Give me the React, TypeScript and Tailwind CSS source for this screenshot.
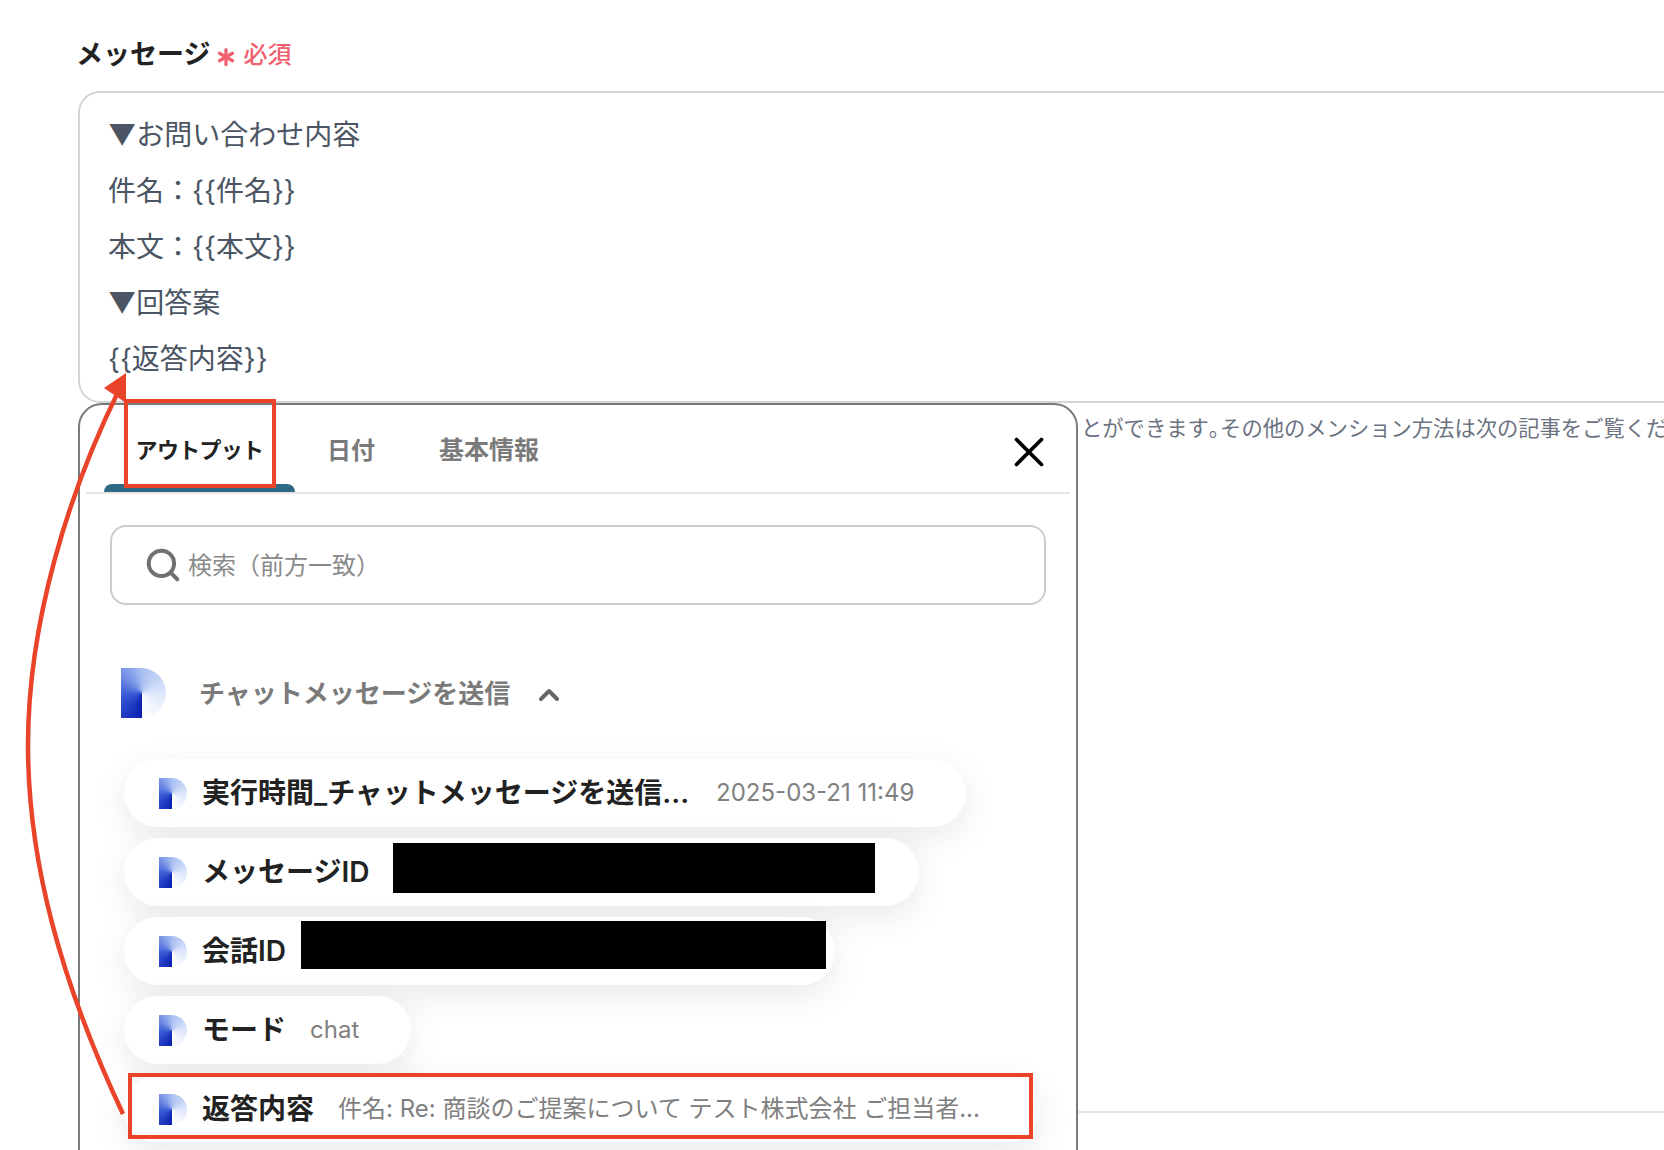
import { Asterisk, Search, X, ChevronUp } from "lucide-react";

interface Output {
  label: string;
  value?: string;
  width: string;
  redacted?: string;
  gap: string;
}

const outputs: Output[] = [
  { label: "実行時間_チャットメッセージを送信...", value: "2025-03-21 11:49", width: "w-[842px]", gap: "ml-[27px]" },
  { label: "メッセージID", width: "w-[795px]", redacted: "w-[482px] h-[50px] mb-[8px]", gap: "ml-[24px]" },
  { label: "会話ID", width: "w-[711px]", redacted: "w-[525px] h-[48px] mb-[12px]", gap: "ml-[15px]" },
  { label: "モード", value: "chat", width: "w-[287px]", gap: "ml-[24px]" },
  { label: "返答内容", value: "件名: Re: 商談のご提案について テスト株式会社 ご担当者...", width: "w-[916px]", gap: "ml-[24px]" },
];

function Logo({ className }: { className: string }) {
  return (
    <div
      className={`shrink-0 rounded-r-full bg-[conic-gradient(from_180deg_at_47%_50%,#0a1fb0,#3f60d8_90deg,#a9c0f2_180deg,#dde6fb_270deg,#ffffff_360deg)] ${className}`}
    />
  );
}

function OutputPill({ item }: { item: Output }) {
  return (
    <div className={`flex h-[68px] items-center rounded-[34px] bg-white pl-[35px] shadow-[0_10px_36px_rgba(0,0,0,0.09)] ${item.width}`}>
      <Logo className="h-[31px] w-[28px]" />
      <span className="ml-[15px] whitespace-nowrap text-[28px] font-semibold text-[#222222]">{item.label}</span>
      {item.value && (
        <span className={`whitespace-nowrap text-[24px] text-[#808080] ${item.gap}`}>{item.value}</span>
      )}
      {item.redacted && <div className={`bg-black ${item.gap} ${item.redacted}`} />}
    </div>
  );
}

export default function App() {
  return (
    <div className="relative h-[1150px] w-[1664px] overflow-hidden bg-white font-[Inter,'Noto_Sans_CJK_JP',sans-serif]">
      <div className="pt-[36px]">
        <div className="ml-[76px] flex h-[38px] items-center">
          <span className="text-[27px] font-bold text-[#222222]">メッセージ</span>
          <Asterisk className="ml-[1px] mt-[4px] h-[30px] w-[30px] text-[#f0606e]" strokeWidth={2.6} />
          <span className="ml-[2px] text-[24px] font-medium text-[#f0606e]">必須</span>
        </div>
        <div className="ml-[78px] mt-[17px] h-[312px] w-[1640px] rounded-[22px] border-2 border-[#d1d5db] pl-[28px] pt-[14px] text-[28px] text-[#4b5563]">
          <p className="h-[56px] leading-[56px]">▼お問い合わせ内容</p>
          <p className="h-[56px] leading-[56px]">件名：{"{{件名}}"}</p>
          <p className="h-[56px] leading-[56px]">本文：{"{{本文}}"}</p>
          <p className="h-[56px] leading-[56px]">▼回答案</p>
          <p className="h-[56px] leading-[56px]">{"{{返答内容}}"}</p>
        </div>
        <p className="ml-[1081px] mt-[11px] whitespace-nowrap text-[21.3px] leading-[28px] text-[#6b7280]">
          とができます<span className="tracking-[-10px]">。</span>その他のメンション方法は次の記事をご覧ください。
        </p>
        <div className="ml-[1000px] mt-[669px] h-[2px] bg-[#e5e5e5]" />
      </div>

      {/* popup lying over the field */}
      <div className="absolute left-[78px] top-[403px] h-[800px] w-[1000px] rounded-t-[24px] border-2 border-[#7a7a7a] bg-white">
        <div className="relative ml-[6px] mr-[6px] flex h-[89px] items-end border-b-2 border-[#e5e5e5] pl-[18px]">
          <div className="relative flex h-full w-[191px] items-center justify-center pt-[4px]">
            <span className="text-[22px] font-bold tracking-[-0.7px] text-[#222222]">アウトプット</span>
            <div className="absolute bottom-0 left-0 h-[8px] w-full rounded-t-[8px] bg-[#2f6a85]" />
          </div>
          <span className="ml-[32px] flex h-full items-center pt-[4px] text-[24px] font-semibold text-[#7a7a7a]">日付</span>
          <span className="ml-[64px] flex h-full items-center pt-[4px] text-[25px] font-semibold text-[#7a7a7a]">基本情報</span>
          <X className="absolute right-[16px] top-[22px] h-[50px] w-[50px] text-black" strokeWidth={1.8} />
        </div>

        <div className="ml-[30px] mt-[31px] flex h-[80px] w-[936px] items-center rounded-[16px] border-2 border-[#cccccc] pl-[32px]">
          <Search className="h-[38px] w-[38px] text-[#707070]" strokeWidth={2.5} />
          <span className="ml-[6px] mt-[2px] text-[24px] text-[#8a8a8a]">検索（前方一致）</span>
        </div>

        <div className="ml-[41px] mt-[63px] flex h-[50px] items-center">
          <Logo className="h-[50px] w-[45px]" />
          <span className="ml-[33px] text-[26px] font-semibold text-[#7a7a7a]">チャットメッセージを送信</span>
          <ChevronUp className="ml-[23px] mt-[4px] h-[32px] w-[32px] text-[#666666]" strokeWidth={3} />
        </div>

        <div className="ml-[44px] mt-[41px] flex flex-col gap-[11px]">
          {outputs.map((item) => (
            <OutputPill key={item.label} item={item} />
          ))}
        </div>
      </div>

      {/* annotations drawn on top of the screenshot */}
      <div className="absolute left-[124px] top-[399px] h-[89px] w-[152px] border-4 border-[#e9432a]" />
      <div className="absolute left-[128px] top-[1073px] h-[66px] w-[905px] border-4 border-[#e9432a]" />
      <svg className="absolute left-0 top-0 h-[1150px] w-[1664px]" viewBox="0 0 1664 1150" fill="none">
        <path d="M123 1114C60 980 28 860 28 745C28 620 70 490 118 392" stroke="#e9432a" strokeWidth="4.5" />
        <path d="M126 373L104 388L126 403Z" fill="#e9432a" />
      </svg>
    </div>
  );
}
